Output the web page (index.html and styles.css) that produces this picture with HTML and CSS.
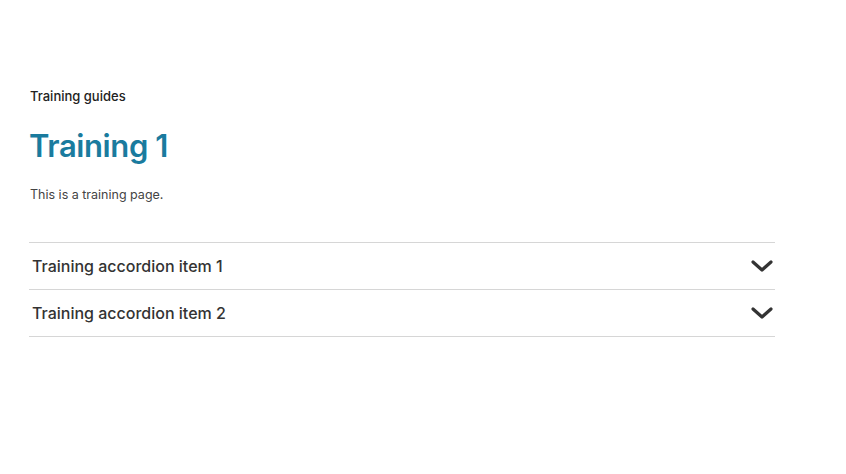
FILE: index.html
```html
<!DOCTYPE html>
<html lang="en">
<head>
    <meta charset="UTF-8">
    <meta name="viewport" content="width=device-width, initial-scale=1.0">
    <title>Training 1</title>
    <link rel="stylesheet" href="styles.css">
</head>
<body>

    <div class="page">
        <div class="breadcrumb">Training guides</div>
        <h1>Training 1</h1>
        <p class="intro">This is a training page.</p>

        <div class="accordion">
            <div class="accordion-item">
                <span>Training accordion item 1</span>
                <svg class="chevron" width="22" height="12" viewBox="0 0 22 12">
                    <path d="M2 2 L11 10 L20 2" fill="none" stroke="#333" stroke-width="3.2" stroke-linecap="round" stroke-linejoin="round"/>
                </svg>
            </div>
            <div class="accordion-item">
                <span>Training accordion item 2</span>
                <svg class="chevron" width="22" height="12" viewBox="0 0 22 12">
                    <path d="M2 2 L11 10 L20 2" fill="none" stroke="#333" stroke-width="3.2" stroke-linecap="round" stroke-linejoin="round"/>
                </svg>
            </div>
        </div>
    </div>

</body>
</html>
```

FILE: styles.css
```css
body {
    margin: 0;
    font-family: Inter, "Noto Sans", Arial, sans-serif;
    background: #ffffff;
    color: #333;
}

.page {
    width: 746px;
    padding: 88px 0 0 29px;
}

.breadcrumb {
    font-size: 13px;
    font-weight: 500;
    color: #222;
    padding-left: 1px;
}

h1 {
    margin: 23px 0 0 0;
    font-size: 31px;
    font-weight: 600;
    color: #1a7b9e;
    letter-spacing: -0.4px;
}

.intro {
    margin: 23px 0 0 1px;
    font-size: 12.5px;
    color: #444;
}

/* Accordion styles */
.accordion {
    margin-top: 40px;
    border-top: 1px solid #d6d6d6;
}

.accordion-item {
    display: flex;
    align-items: center;
    justify-content: space-between;
    height: 46px;
    padding: 0 2px 0 3px;
    border-bottom: 1px solid #d6d6d6;
    font-size: 16px;
    font-weight: 500;
    color: #333;
}

.chevron {
    display: block;
}
```
